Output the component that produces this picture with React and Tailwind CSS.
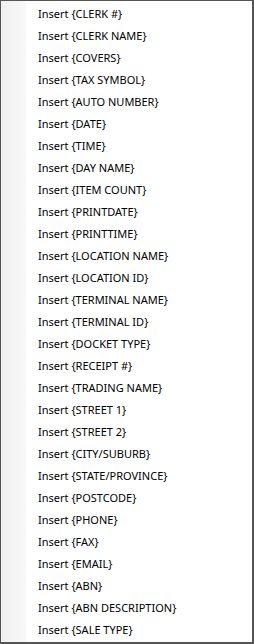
const items = [
  'CLERK #',
  'CLERK NAME',
  'COVERS',
  'TAX SYMBOL',
  'AUTO NUMBER',
  'DATE',
  'TIME',
  'DAY NAME',
  'ITEM COUNT',
  'PRINTDATE',
  'PRINTTIME',
  'LOCATION NAME',
  'LOCATION ID',
  'TERMINAL NAME',
  'TERMINAL ID',
  'DOCKET TYPE',
  'RECEIPT #',
  'TRADING NAME',
  'STREET 1',
  'STREET 2',
  'CITY/SUBURB',
  'STATE/PROVINCE',
  'POSTCODE',
  'PHONE',
  'FAX',
  'EMAIL',
  'ABN',
  'ABN DESCRIPTION',
  'SALE TYPE',
];

export default function App() {
  return (
    <div className="w-[254px] h-[644px] bg-white border-t border-l border-r-2 border-b-2 border-[#555555] flex overflow-hidden font-['Noto_Sans',sans-serif]">
      <div className="w-[25px] shrink-0 bg-gradient-to-r from-[#f0f0f0] to-[#f8f8f8]" />
      <div className="flex-1 flex flex-col pt-px">
        {items.map((it) => (
          <div key={it} className="h-[22px] flex items-center pl-[12px] text-[11px] text-black leading-none">
            Insert {'{'}{it}{'}'}
          </div>
        ))}
      </div>
    </div>
  );
}
